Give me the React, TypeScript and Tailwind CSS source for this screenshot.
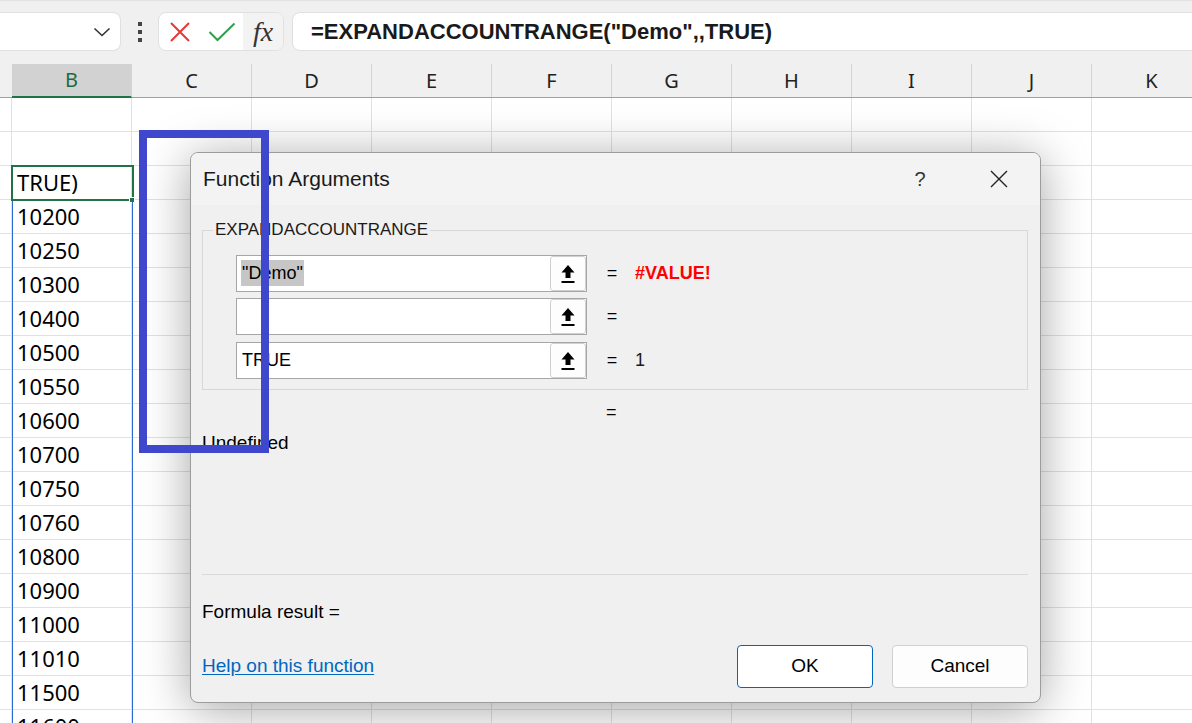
import React from 'react';

const cols = ['B', 'C', 'D', 'E', 'F', 'G', 'H', 'I', 'J', 'K'];

const cells = [
  '', '', 'TRUE)', '10200', '10250', '10300', '10400', '10500', '10550', '10600',
  '10700', '10750', '10760', '10800', '10900', '11000', '11010', '11500', '11600',
];

const UpArrow = () => (
  <svg width="16" height="22" viewBox="0 0 16 22">
    <path d="M8 2 L1.5 9.5 H5.5 V15 H10.5 V9.5 H14.5 Z" fill="#000" />
    <rect x="1.5" y="18" width="13" height="2" fill="#000" />
  </svg>
);

const ArgRow = ({ value, result, resultClass, selected, className }: {
  value?: string; result?: string; resultClass?: string; selected?: boolean; className?: string;
}) => (
  <div className={`flex items-center h-[37px] ${className || ''}`}>
    <div className="w-[351px] h-full border border-[#a6a6a6] bg-white flex items-center">
      <div className="flex-1 pl-[4px] text-[18px] text-black">
        {value && (
          <span className={selected ? 'bg-[#c6c6c6] px-[1px] py-[3px]' : 'px-[1px]'}>{value}</span>
        )}
      </div>
      <div className="w-[36px] h-[35px] rounded-[3px] border border-[#d0d0d0] bg-[#fdfdfd] flex items-center justify-center">
        <UpArrow />
      </div>
    </div>
    <span className="ml-[19px] w-[12px] text-center text-[18px] text-black">=</span>
    <span className={`ml-[17px] text-[18px] ${resultClass || 'text-black'}`}>{result}</span>
  </div>
);

export default function App() {
  return (
    <div
      className="relative w-[1192px] h-[723px] overflow-hidden bg-white"
      style={{ fontFamily: '"Liberation Sans", Arial, sans-serif' }}
    >
      {/* formula bar */}
      <div className="h-[64px] bg-[#f0f0f0] border-t border-[#e2e2e2] pt-[11px] flex items-start">
        <div className="w-[121px] h-[39px] bg-white border border-l-0 border-[#e0e0e0] rounded-r-lg flex items-center justify-end pr-[9px]">
          <svg width="18" height="10" viewBox="0 0 18 10">
            <path d="M1.5 1.5 L9 8.5 L16.5 1.5" fill="none" stroke="#333" strokeWidth="1.6" />
          </svg>
        </div>
        <div className="w-[37px] h-[39px] flex flex-col items-center justify-center gap-[4px]">
          <div className="w-[4px] h-[4px] bg-[#444]" />
          <div className="w-[4px] h-[4px] bg-[#444]" />
          <div className="w-[4px] h-[4px] bg-[#444]" />
        </div>
        <div className="w-[126px] h-[39px] bg-white border border-[#e0e0e0] rounded-lg flex items-center overflow-hidden">
          <div className="w-[42px] flex justify-center">
            <svg width="22" height="22" viewBox="0 0 22 22">
              <path d="M2 2 L20 20 M20 2 L2 20" stroke="#e5383b" strokeWidth="2" />
            </svg>
          </div>
          <div className="w-[42px] flex justify-center">
            <svg width="28" height="20" viewBox="0 0 28 20">
              <path d="M1.5 10 L9.5 18 L26.5 1.5" fill="none" stroke="#2ea04c" strokeWidth="2" />
            </svg>
          </div>
          <div
            className="flex-1 h-full bg-[#f3f3f3] flex items-center justify-center text-[28px] italic text-[#333]"
            style={{ fontFamily: '"Liberation Serif", "Times New Roman", serif' }}
          >
            fx
          </div>
        </div>
        <div className="flex-1 ml-[8px] mr-[-12px] h-[39px] bg-white border border-[#e0e0e0] rounded-lg flex items-center pl-[18px] text-[22px] font-bold text-[#1a1a1a]">
          =EXPANDACCOUNTRANGE("Demo",,TRUE)
        </div>
      </div>

      {/* column headers */}
      <div
        className="flex h-[34px] bg-[#f0f0f0] border-b border-[#a0a0a0]"
        style={{ fontFamily: '"Noto Sans", sans-serif' }}
      >
        <div className="w-[12px] shrink-0" />
        {cols.map(c => (
          <div
            key={c}
            className={`w-[120px] shrink-0 flex items-center justify-center text-[20px] border-r border-[#d4d4d4] ${
              c === 'B' ? 'bg-[#d2d2d2] text-[#1e6b41] border-b-2 border-b-[#217346] -mb-px' : 'text-[#222]'
            }`}
          >
            {c}
          </div>
        ))}
      </div>

      {/* grid */}
      <div style={{ fontFamily: '"Noto Sans", sans-serif' }}>
        {cells.map((v, i) => (
          <div key={i} className="flex h-[34px]">
            <div className="w-[12px] shrink-0 border-b border-r border-[#e1e1e1]" />
            <div className="w-[120px] shrink-0 border-b border-r border-[#e1e1e1] flex items-center pl-[5px] text-[22px] text-black">
              {v}
            </div>
            {cols.slice(1).map(c => (
              <div key={c} className="w-[120px] shrink-0 border-b border-r border-[#e1e1e1]" />
            ))}
          </div>
        ))}
      </div>

      {/* selected cell + range */}
      <div className="absolute left-[11px] top-[165px] w-[123px] h-[36px] border-2 border-[#217346]" />
      <div className="absolute left-[129px] top-[197px] w-[6px] h-[6px] bg-[#217346] border border-white" />
      <div className="absolute left-[12px] top-[201px] w-[121px] h-[540px] border-x border-[#2b6cd4]" />

      {/* dialog */}
      <div className="absolute left-[190px] top-[152px] w-[851px] h-[551px] rounded-lg border border-[#9c9c9c] bg-[#f0f0f0] shadow-[0_6px_48px_rgba(0,0,0,0.36)] flex flex-col overflow-hidden">
        <div className="h-[52px] bg-[#f3f3f3] flex items-center pl-[12px]">
          <span className="text-[21px] text-[#1a1a1a]">Function Arguments</span>
          <span className="ml-auto w-[40px] text-center text-[20px] text-[#333]">?</span>
          <div className="ml-[39px] w-[40px] flex justify-center mr-[21px]">
            <svg width="18" height="18" viewBox="0 0 18 18">
              <path d="M1 1 L17 17 M17 1 L1 17" stroke="#222" strokeWidth="1.4" />
            </svg>
          </div>
        </div>

        <div className="flex-1 pl-[11px] pr-[12px] pt-[15px] flex flex-col">
          <fieldset className="border border-[#d8d8d8] pb-[10px]">
            <legend className="ml-[10px] px-[2px] text-[17px] leading-[20px] text-[#1a1a1a]">EXPANDACCOUNTRANGE</legend>
            <div className="ml-[33px] pt-[15px]">
              <ArgRow value={'"Demo"'} selected result="#VALUE!" resultClass="text-[#ff0000] font-bold text-[17px]" />
              <ArgRow className="mt-[6px]" />
              <ArgRow className="mt-[7px]" value="TRUE" result="1" resultClass="text-[#1a1a1a]" />
            </div>
          </fieldset>

          <div className="mt-[12px] h-[20px] pl-[404px] text-[18px] leading-[20px] text-black">=</div>
          <div className="mt-[10px] h-[22px] text-[19px] leading-[22px] text-black">Undefined</div>

          <div className="mt-[120px] h-px bg-[#d9d9d9]" />

          <div className="mt-[26px] h-[22px] text-[19px] leading-[22px] text-black">Formula result =</div>

          <div className="mt-[22px] flex items-center">
            <span className="text-[19px] text-[#0067c0] underline underline-offset-2">Help on this function</span>
            <button className="ml-auto w-[136px] h-[43px] rounded-[4px] bg-white border border-[#0067c0] text-[19px] text-black">
              OK
            </button>
            <button className="ml-[19px] w-[136px] h-[43px] rounded-[4px] bg-[#fdfdfd] border border-[#d0d0d0] text-[19px] text-black">
              Cancel
            </button>
          </div>
        </div>
      </div>

      {/* annotation box */}
      <div className="absolute left-[139px] top-[130px] w-[130px] h-[323px] border-[8px] border-[#3f48cc]" />
    </div>
  );
}
